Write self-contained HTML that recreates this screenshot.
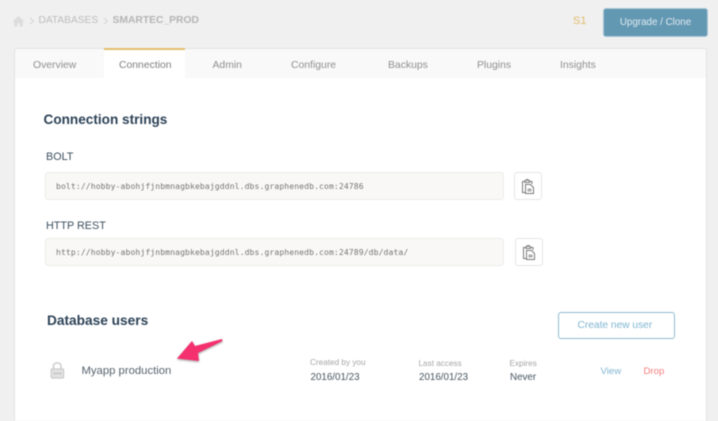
<!DOCTYPE html>
<html><head><meta charset="utf-8">
<style>
html,body{margin:0;padding:0;width:718px;height:421px;overflow:hidden;background:#f0f0f0}
body{font-family:"Liberation Sans",sans-serif;position:relative}
#w{position:absolute;left:0;top:0;width:718px;height:421px;overflow:hidden;background:#f0f0f0;filter:blur(.4px)}
.a{position:absolute;white-space:nowrap}
.tab{font-size:10.4px;color:#8f8f8f;top:58px;line-height:13px}
.lbl{font-size:10.800px;color:#3d4f5f;line-height:13px}
.code{position:absolute;left:45px;width:457px;height:26px;background:#f9f8f6;border:1px solid #ececea;border-radius:3px;font-family:"DejaVu Sans Mono",monospace;font-size:8.1px;letter-spacing:.09px;line-height:26px;color:#757575;text-indent:10px;white-space:nowrap}
.copy{position:absolute;width:26px;height:26px;background:#fff;border:1px solid #e6e6e6;border-radius:3px}
.sm{font-size:8.2px;color:#a5a5a5;line-height:10px}
.val{font-size:9.800px;color:#46545f;line-height:12px}
</style></head><body><div id="w">
<svg class="a" style="left:12px;top:15px" width="13" height="12" viewBox="0 0 13 12"><path d="M6.500 1 L12.500 6.500 H10.800 V11.500 H7.600 V8 H5.400 V11.500 H2.200 V6.500 H.5 Z" fill="#dcdcdc"/></svg>
<svg class="a" style="left:29px;top:17px" width="6" height="8" viewBox="0 0 6 8"><path d="M1 1 L4.500 4 L1 7" fill="none" stroke="#d4d4d4" stroke-width="1"/></svg>
<div class="a" style="left:38.500px;top:14px;font-size:10.200px;line-height:13px;color:#bdbdbd">DATABASES</div>
<svg class="a" style="left:103px;top:17px" width="6" height="8" viewBox="0 0 6 8"><path d="M1 1 L4.500 4 L1 7" fill="none" stroke="#d4d4d4" stroke-width="1"/></svg>
<div class="a" style="left:112.500px;top:14px;font-size:10.300px;line-height:13px;font-weight:bold;color:#b5b5b5">SMARTEC_PROD</div>
<div class="a" style="left:573px;top:14px;font-size:11px;line-height:14px;color:#e3bd6b">S1</div>
<div class="a" style="left:603px;top:8px;width:103px;height:27px;background:#6398b3;border:.5px solid #a9c6d6;border-radius:3px;box-sizing:content-box;color:#dfeaf0;font-size:9.800px;line-height:27px;text-align:center">Upgrade / Clone</div>

<div class="a" style="left:14px;top:48px;width:691px;height:372px;background:#fff;border:1px solid #e2e2e2;border-bottom:none;border-radius:2px 2px 0 0"></div>
<div class="a" style="left:15px;top:49px;width:691px;height:29px;background:#f9f9f9"></div>
<div class="a" style="left:104px;top:48px;width:81px;height:30px;background:#fff;border-top:2px solid #e3bd6b;box-sizing:border-box"></div>
<div class="a tab" style="left:33px;top:59px">Overview</div>
<div class="a tab" style="left:119px;top:59px;color:#7f7f7f">Connection</div>
<div class="a tab" style="left:212.500px;top:59px">Admin</div>
<div class="a tab" style="left:291px;top:59px">Configure</div>
<div class="a tab" style="left:388px;top:59px">Backups</div>
<div class="a tab" style="left:477px;top:59px">Plugins</div>
<div class="a tab" style="left:560px;top:59px">Insights</div>

<div class="a" style="left:43.500px;top:111px;font-size:13.600px;line-height:17px;font-weight:bold;color:#2c4257">Connection strings</div>
<div class="a lbl" style="left:46px;top:151px">BOLT</div>
<div class="code" style="top:172px">bolt://hobby-abohjfjnbmnagbkebajgddnl.dbs.graphenedb.com:24786</div>
<div class="copy" style="left:514px;top:172px"><svg width="26" height="26" viewBox="0 0 26 26"><path d="M10 8.500 H7.500 V19.500 H10.500 M14.500 8.500 H17 V11 M10 9.500 V7.500 H11.500 V6.500 H13 V7.500 H14.500 V9.500 Z" fill="none" stroke="#7a7a7a" stroke-width="1"/><path d="M10.500 11.500 H15.500 L18.500 14.500 V20.500 H10.500 Z" fill="none" stroke="#7a7a7a" stroke-width="1"/><path d="M12.500 15.500 H16.500 V18.500 H12.500 Z" fill="#aaa"/></svg></div>
<div class="a lbl" style="left:46px;top:220px">HTTP REST</div>
<div class="code" style="top:238px">http://hobby-abohjfjnbmnagbkebajgddnl.dbs.graphenedb.com:24789/db/data/</div>
<div class="copy" style="left:515px;top:238px"><svg width="26" height="26" viewBox="0 0 26 26"><path d="M10 8.500 H7.500 V19.500 H10.500 M14.500 8.500 H17 V11 M10 9.500 V7.500 H11.500 V6.500 H13 V7.500 H14.500 V9.500 Z" fill="none" stroke="#7a7a7a" stroke-width="1"/><path d="M10.500 11.500 H15.500 L18.500 14.500 V20.500 H10.500 Z" fill="none" stroke="#7a7a7a" stroke-width="1"/><path d="M12.500 15.500 H16.500 V18.500 H12.500 Z" fill="#aaa"/></svg></div>

<div class="a" style="left:47px;top:312px;font-size:13.700px;line-height:17px;font-weight:bold;color:#2c4257">Database users</div>
<div class="a" style="left:558px;top:312px;width:115px;height:25px;border:1px solid #8fbccf;border-radius:3px;color:#7fb6d2;font-size:10.200px;line-height:25px;text-align:left;text-indent:18.500px">Create new user</div>

<svg class="a" style="left:50px;top:361px" width="16" height="18" viewBox="0 0 16 18"><path d="M3.500 8 V5 C3.500 .9 11 .9 11 5 V8" fill="none" stroke="#cfcfcf" stroke-width="1.600"/><rect x="1.200" y="8" width="12.400" height="9" rx="1" fill="#e2e2e2" stroke="#cacaca" stroke-width="1.200"/><path d="M4 12.500 H11" stroke="#a8a8a8" stroke-width="1.400" stroke-dasharray="1.400 1.400"/></svg>
<div class="a" style="left:81.500px;top:364px;font-size:11.300px;line-height:14px;color:#56636e">Myapp production</div>

<svg class="a" style="left:170px;top:330px;overflow:visible" width="60" height="40" viewBox="0 0 60 40"><path d="M7 28.500 L22 11 L25 16 L52 9 L52.500 11 L28 23 L29 31 Z" fill="#f5306f" style="filter:drop-shadow(0 1.500px 1px rgba(0,0,0,.4))"/></svg>

<div class="a sm" style="left:310px;top:358px">Created by you</div>
<div class="a val" style="left:310.500px;top:372px">2016/01/23</div>
<div class="a sm" style="left:418.500px;top:359px">Last access</div>
<div class="a val" style="left:419px;top:372px">2016/01/23</div>
<div class="a sm" style="left:509.500px;top:359px">Expires</div>
<div class="a val" style="left:510px;top:372px">Never</div>
<div class="a" style="left:600.500px;top:366px;font-size:9.600px;line-height:12px;color:#82b6d3">View</div>
<div class="a" style="left:643.500px;top:366px;font-size:9.600px;line-height:12px;color:#f57a7a">Drop</div>
</div></body></html>
